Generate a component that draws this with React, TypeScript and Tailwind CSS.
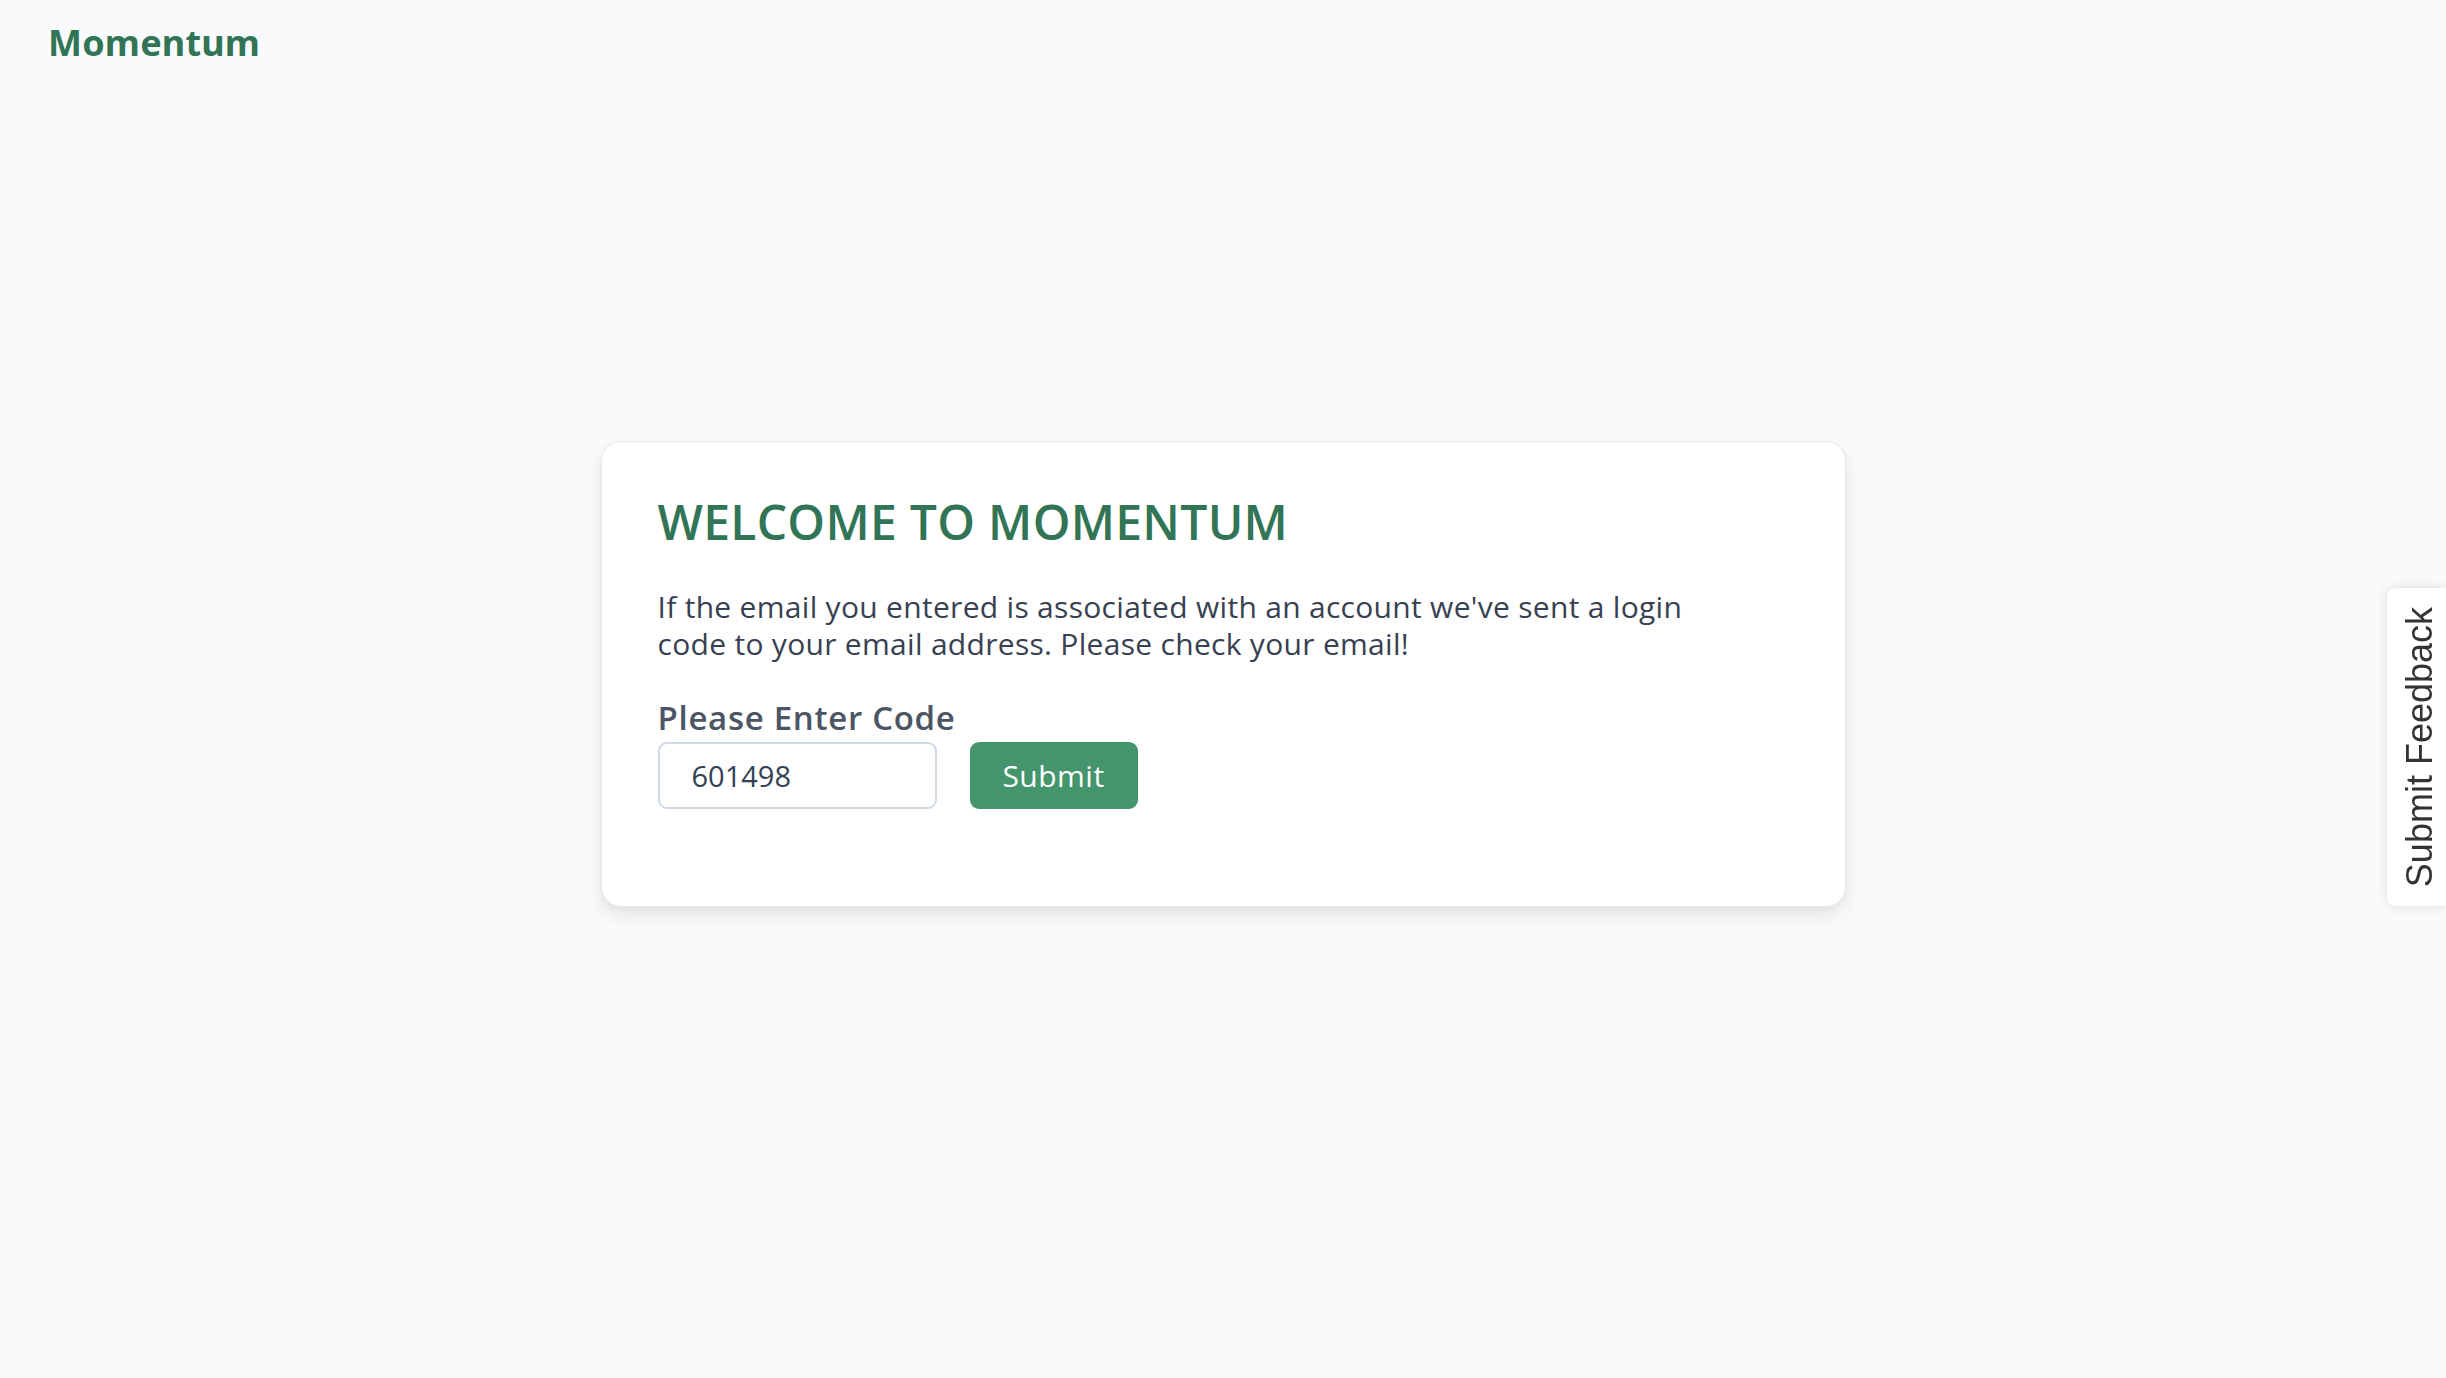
import { useState } from 'react';

const bodyFont = { fontFamily: '"Open Sans", "Noto Sans", sans-serif' };

function FeedbackTab() {
  return (
    <button
      type="button"
      className="fixed right-0 top-[588px] flex h-[318px] w-[59px] items-center justify-center rounded-l-lg bg-white shadow-[0_0_12px_rgba(0,0,0,0.12)]"
    >
      <span
        className="ml-[6px] rotate-180 text-[36px] leading-none text-[#333] [writing-mode:vertical-rl]"
        style={{ fontFamily: '"Liberation Sans", Arial, sans-serif' }}
      >
        Submit Feedback
      </span>
    </button>
  );
}

export default function App() {
  const [code, setCode] = useState('601498');

  return (
    <div className="relative min-h-screen bg-[#f9fafb]" style={bodyFont}>
      <header className="flex h-[86px] items-center px-[48px]">
        <span
          className="text-[36px] font-bold tracking-[0.2px] text-[#327556]"
          style={{ fontFamily: '"Noto Sans", sans-serif' }}
        >
          Momentum
        </span>
      </header>

      <main className="flex justify-center pt-[355px]">
        <section className="w-[1245px] rounded-[20px] border border-[#e5e7eb] bg-white px-14 pb-[97px] pt-[54px] shadow-[0_10px_20px_rgba(0,0,0,0.07),0_4px_8px_rgba(0,0,0,0.04)]">
          <h1 className="text-[48px] font-semibold uppercase leading-[52px] tracking-[0.3px] text-[#327556]">
            Welcome to Momentum
          </h1>

          <p className="mt-[40px] text-[30px] leading-[37px] tracking-[0.3px] text-[#374151]">
            If the email you entered is associated with an account we've sent a login
            <br />
            code to your email address. Please check your email!
          </p>

          <label className="mt-[37px] block text-[33px] font-semibold leading-[38px] tracking-[0.7px] text-[#4b5563]" htmlFor="code">
            Please Enter Code
          </label>
          <div className="mt-[5px] flex gap-[33px]">
            <input
              id="code"
              value={code}
              onChange={(event) => setCode(event.target.value)}
              className="h-[67px] w-[279px] rounded-[9px] border-2 border-[#cfd8e3] bg-white pl-[32px] text-[29px] text-[#334155] outline-none"
            />
            <button
              type="button"
              className="h-[67px] w-[168px] rounded-[9px] bg-[#44946c] text-[30px] tracking-[0.5px] text-white"
            >
              Submit
            </button>
          </div>
        </section>
      </main>

      <FeedbackTab />
    </div>
  );
}
